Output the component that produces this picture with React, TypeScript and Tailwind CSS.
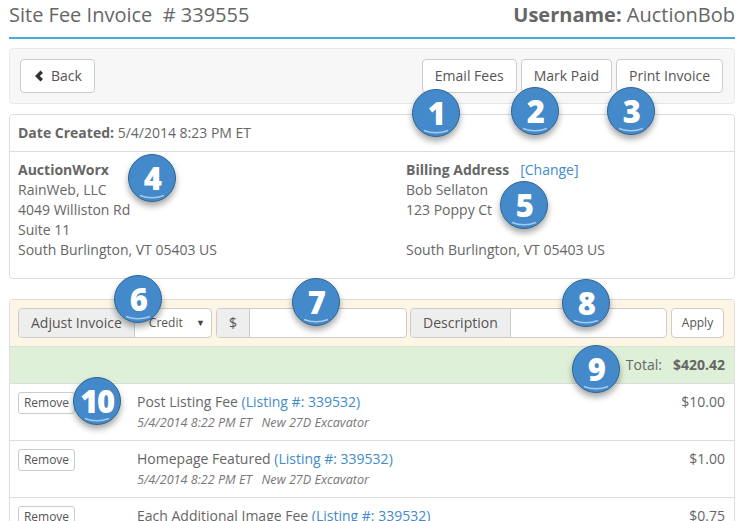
const font = "font-['Open_Sans',sans-serif]";

function Badge({ n, className }: { n: number; className: string }) {
  return (
    <div
      className={`absolute flex h-[48px] w-[48px] items-center justify-center rounded-full border border-[#2f6696] bg-[#4489c9] shadow-[0_4px_6px_rgba(0,0,0,0.35)] ${className}`}
    >
      <svg className="absolute left-0 top-0" width="46" height="46" viewBox="0 0 46 46" fill="none">
        <path d="M11 40.5 Q23 45 35 40.5" stroke="#a6cbec" strokeWidth="1.5" />
      </svg>
      <span className="relative text-[31px] font-extrabold leading-none tracking-[-1.5px] text-white">{n}</span>
    </div>
  );
}

function Btn({ children }: { children: React.ReactNode }) {
  return (
    <button className="flex h-[34px] items-center rounded border border-[#ccc] bg-white px-[12px] text-[14px] text-[#555]">
      {children}
    </button>
  );
}

function Addon({ children }: { children: React.ReactNode }) {
  return (
    <span className="flex h-full items-center border-r border-[#ccc] bg-[#eee] text-[14px] text-[#555]">
      {children}
    </span>
  );
}

const rows = [
  { title: "Post Listing Fee", price: "$10.00" },
  { title: "Homepage Featured", price: "$1.00" },
  { title: "Each Additional Image Fee", price: "$0.75" },
];

export default function App() {
  return (
    <div className={`relative h-[521px] w-[744px] overflow-hidden bg-white px-[9px] text-[14px] leading-[20px] text-[#666] ${font}`}>
      {/* Header */}
      <div className="flex h-[39px] items-start justify-between border-b-2 border-[#46acd9] pt-[1px]">
        <h1 className="text-[20px] font-normal leading-[28px] text-[#666]">Site Fee Invoice&nbsp; # 339555</h1>
        <div className="text-[20px] leading-[28px]">
          <b className="font-bold">Username:</b> AuctionBob
        </div>
      </div>

      {/* Toolbar */}
      <div className="mt-[9px] flex h-[56px] items-center justify-between rounded border border-[#e8e8e8] bg-[#f7f7f7] pl-[10px] pr-[11px]">
        <Btn>
          <svg className="ml-[1px] mr-[7px]" width="10" height="12" viewBox="0 0 10 12" fill="#333">
            <path d="M6.5 0.5 L9 3 L5.8 6 L9 9 L6.5 11.5 L1 6 Z" />
          </svg>
          Back
        </Btn>
        <div className="flex gap-[4px]">
          <Btn>Email Fees</Btn>
          <Btn>Mark Paid</Btn>
          <Btn>Print Invoice</Btn>
        </div>
      </div>

      {/* Addresses */}
      <div className="mt-[10px] h-[165px] rounded border border-[#ddd]">
        <div className="flex h-[37px] items-center border-b border-[#ddd] px-[8px]">
          <span><b className="font-bold">Date Created:</b> 5/4/2014 8:23 PM ET</span>
        </div>
        <div className="grid grid-cols-2 px-[8px] pt-[8px]">
          <div>
            <b className="font-bold">AuctionWorx</b>
            <div>RainWeb, LLC</div>
            <div>4049 Williston Rd</div>
            <div>Suite 11</div>
            <div>South Burlington, VT 05403 US</div>
          </div>
          <div className="pl-[34px]">
            <div>
              <b className="font-bold">Billing Address</b>
              <span className="ml-[11px] text-[#428bca]">[Change]</span>
            </div>
            <div>Bob Sellaton</div>
            <div>123 Poppy Ct</div>
            <div className="h-[20px]" />
            <div>South Burlington, VT 05403 US</div>
          </div>
        </div>
      </div>

      {/* Fees */}
      <div className="mt-[20px] rounded-t border border-b-0 border-[#ddd]">
        <div className="flex h-[47px] items-center gap-[4px] border-b border-[#ddd] bg-[#fdf6e5] px-[8px]">
          <div className="flex h-[30px] w-[194px] items-center overflow-hidden rounded border border-[#ccc] bg-white">
            <Addon><span className="px-[12px]">Adjust Invoice</span></Addon>
            <span className="ml-[14px] flex-1 text-[12px] text-[#555]">Credit</span>
            <span className="mr-[6px] text-[9px] text-[#444]">▼</span>
          </div>
          <div className="flex h-[30px] w-[191px] items-center overflow-hidden rounded border border-[#ccc] bg-white">
            <Addon><span className="px-[12px]">$</span></Addon>
          </div>
          <div className="-ml-[1px] flex h-[30px] w-[257px] items-center overflow-hidden rounded border border-[#ccc] bg-white">
            <Addon><span className="px-[12px]">Description</span></Addon>
          </div>
          <button className="flex h-[30px] w-[53px] items-center justify-center rounded border border-[#ccc] bg-white text-[12px] text-[#555]">
            Apply
          </button>
        </div>
        <div className="flex h-[37px] items-center justify-end border-b border-[#ddd] bg-[#dff0d8] pr-[9px]">
          <span>Total:</span>
          <b className="ml-[11px] font-bold">$420.42</b>
        </div>
        {rows.map((r) => (
          <div key={r.title} className="flex h-[57px] border-b border-[#ddd] pl-[8px] pr-[9px] pt-[8px]">
            <button className="flex h-[22px] w-[57px] items-center justify-center rounded-[3px] border border-[#ccc] bg-white text-[12px] text-[#555]">
              Remove
            </button>
            <div className="ml-[62px] flex-1">
              <div className="leading-[20px]">
                {r.title} <span className="text-[#428bca]">(Listing #: 339532)</span>
              </div>
              <div className="mt-[2px] text-[12.6px] italic leading-[17px] text-[#777]">
                5/4/2014 8:22 PM ET&nbsp;&nbsp; New 27D Excavator
              </div>
            </div>
            <div>{r.price}</div>
          </div>
        ))}
      </div>

      <Badge n={1} className="left-[412px] top-[89px]" />
      <Badge n={2} className="left-[511px] top-[87px]" />
      <Badge n={3} className="left-[607px] top-[87px]" />
      <Badge n={4} className="left-[128px] top-[154px]" />
      <Badge n={5} className="left-[500px] top-[181px]" />
      <Badge n={6} className="left-[114px] top-[275px]" />
      <Badge n={7} className="left-[292px] top-[278px]" />
      <Badge n={8} className="left-[562px] top-[279px]" />
      <Badge n={9} className="left-[572px] top-[345px]" />
      <Badge n={10} className="left-[73px] top-[377px]" />
    </div>
  );
}
